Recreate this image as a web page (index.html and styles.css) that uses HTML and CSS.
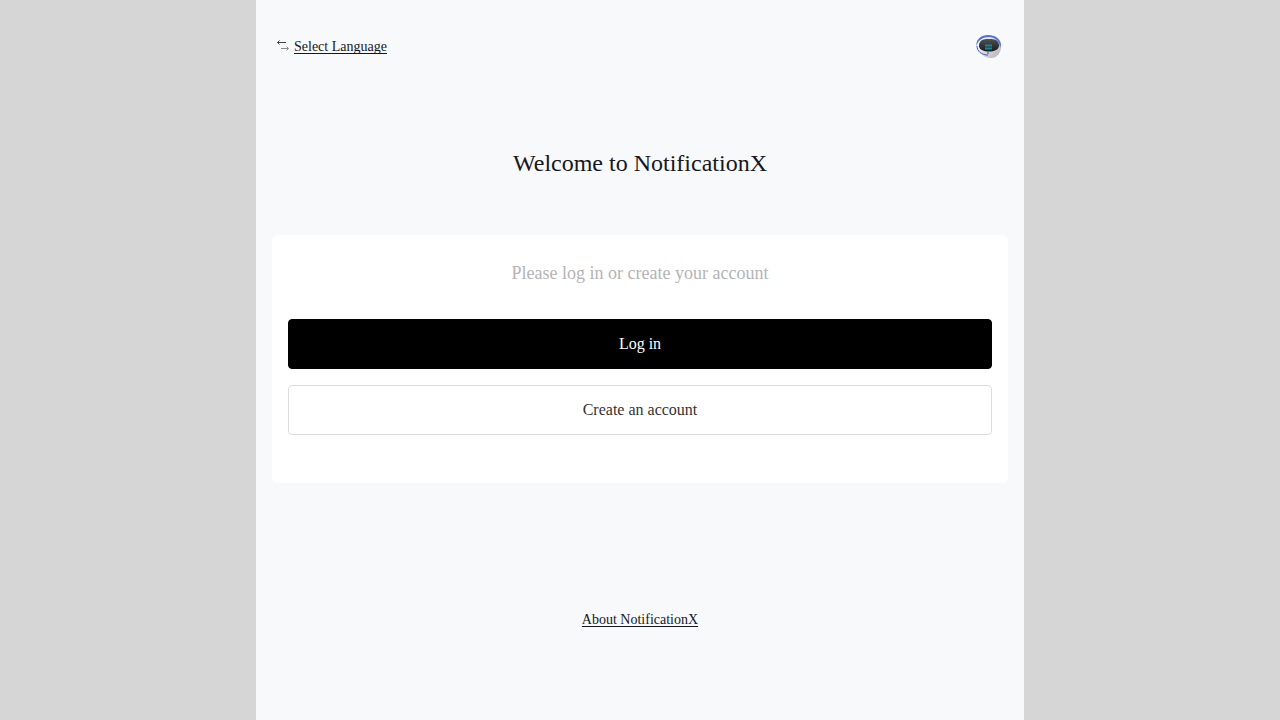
FILE: index.html
```html
<!DOCTYPE html>
<html lang="en">
<head>
<meta charset="utf-8">
<meta name="viewport" content="width=device-width, initial-scale=1">
<title>NotificationX</title>
<link rel="stylesheet" href="styles.css">
</head>
<body>
<div class="page">
  <header class="topbar">
    <a class="language" href="#">
      <svg class="language-icon" viewBox="0 0 14 14" aria-hidden="true">
        <path d="M10 2.500H1.500M3.500.500 1.500 2.500l2 2" stroke="#444"/>
        <path d="M5 8.500h7.500M10.500 6.500l2 2-2 2" stroke="#8a8a8a"/>
      </svg>
      <span class="link-text">Select Language</span>
    </a>
    <svg class="logo" viewBox="0 0 28 30" role="img" aria-label="NotificationX">
      <defs>
        <linearGradient id="shell" x1="0" y1="0" x2="1" y2="1"><stop offset="0" stop-color="#fff"/><stop offset="1" stop-color="#b5b1b7"/></linearGradient>
        <linearGradient id="screen" x1="0" y1="0" x2="0" y2="1"><stop offset="0" stop-color="#505053"/><stop offset="1" stop-color="#1a1b1f"/></linearGradient>
      </defs>
      <path d="M2 14C2 8 7 4 13 4s12 5 12 11-4 11-10 11c-5 0-8-2-10-5s-3-4-3-7z" fill="url(#shell)"/>
      <path d="M.500 14C-.500 8 5 3 12 3c7 0 13 4 13 10l-1 3c0-7-5-11-11-11C7 5 2 8 .500 14z" fill="#4d6fdc"/>
      <path d="M1 14c0 5 4 9 11 9" fill="none" stroke="#3857c8" stroke-width="1"/>
      <path d="M4 10c2-3 5-3 9-3s7 0 9 3c2 3 1 7-2 8-4 2-10 2-14 0-3-1-4-5-2-8z" fill="url(#screen)"/>
      <path d="M9 13.500h7M9 16.500h7" fill="none" stroke="#128799" stroke-width="2"/>
      <path d="M11 21h2" stroke="#55545b" stroke-width="1"/>
    </svg>
  </header>
  <main>
    <h1 class="title">Welcome to NotificationX</h1>
    <section class="card">
      <p class="prompt">Please log in or create your account</p>
      <button class="button primary" type="button">Log in</button>
      <button class="button secondary" type="button">Create an account</button>
    </section>
  </main>
  <footer class="footer"><a class="link-text" href="#">About NotificationX</a></footer>
</div>
</body>
</html>
```
FILE: styles.css
```css
* { box-sizing: border-box; }
body { margin: 0; background: #d6d6d6; color: #16181d; font: 14px/20px "Liberation Serif", serif; }
.page { width: 60%; min-height: 100vh; margin: 0 auto; padding: 32px 16px; background: #f8f9fb; }
.topbar { display: flex; align-items: center; justify-content: space-between; height: 30px; padding: 0 4px; }
.language { display: flex; align-items: center; gap: 4px; color: inherit; text-decoration: none; }
.language-icon { width: 14px; height: 14px; fill: none; stroke-width: 1; }
.logo { width: 28px; height: 30px; }
.link-text { color: inherit; line-height: 20px; text-decoration: underline 1px; text-underline-offset: 2px; text-decoration-skip-ink: none; }
.title { margin: 86px 0 56px; font-size: 24px; line-height: 31px; font-weight: 400; text-align: center; }
.card { display: flex; flex-direction: column; gap: 16px; padding: 24px 16px 48px; border-radius: 6px; background: #fff; }
.prompt { margin: 0 0 16px; font-size: 18px; line-height: 28px; color: #b4b4b4; text-align: center; }
.button { width: 100%; height: 50px; border: 1px solid #dcdcdc; border-radius: 4px; font: 16px/20px "Liberation Serif", serif; cursor: pointer; }
.primary { background: #000; border-color: #000; color: #fff; }
.secondary { background: #fff; color: #333; }
.footer { margin-top: 127px; text-align: center; }
```
